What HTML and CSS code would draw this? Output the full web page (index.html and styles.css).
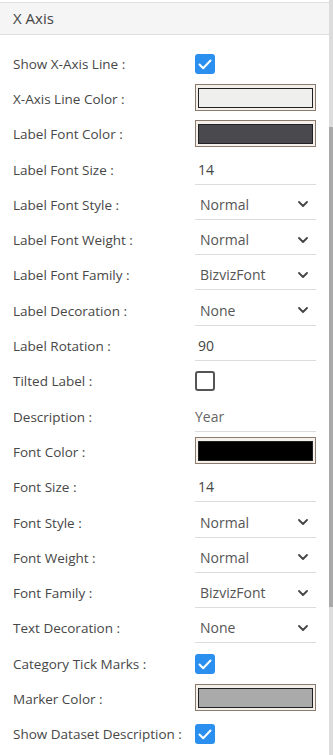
FILE: index.html
```html
<!DOCTYPE html>
<html lang="en">
<head>
<meta charset="utf-8">
<title>X Axis</title>
<link rel="stylesheet" href="styles.css">
</head>
<body>
<div class="frame">
  <div class="panel">
    <div class="header">X Axis</div>
    <div class="form">
      <div class="row"><span class="label">Show X-Axis Line :</span><span class="check on"><svg viewBox="0 0 20 20"><path d="M4.5 10.5l3.7 3.7 7.3-7.7"/></svg></span></div>
      <div class="row"><span class="label">X-Axis Line Color :</span><span class="color"><span class="swatch" style="background:#efefee"></span></span></div>
      <div class="row"><span class="label">Label Font Color :</span><span class="color"><span class="swatch" style="background:#4a4a4e"></span></span></div>
      <div class="row"><span class="label">Label Font Size :</span><span class="input">14</span></div>
      <div class="row"><span class="label">Label Font Style :</span><span class="select">Normal<svg class="chev" viewBox="0 0 10 6"><path d="M1 1l4 4 4-4"/></svg></span></div>
      <div class="row"><span class="label">Label Font Weight :</span><span class="select">Normal<svg class="chev" viewBox="0 0 10 6"><path d="M1 1l4 4 4-4"/></svg></span></div>
      <div class="row"><span class="label">Label Font Family :</span><span class="select">BizvizFont<svg class="chev" viewBox="0 0 10 6"><path d="M1 1l4 4 4-4"/></svg></span></div>
      <div class="row"><span class="label">Label Decoration :</span><span class="select">None<svg class="chev" viewBox="0 0 10 6"><path d="M1 1l4 4 4-4"/></svg></span></div>
      <div class="row"><span class="label">Label Rotation :</span><span class="input">90</span></div>
      <div class="row"><span class="label">Tilted Label :</span><span class="check"></span></div>
      <div class="row"><span class="label">Description :</span><span class="input desc">Year</span></div>
      <div class="row"><span class="label">Font Color :</span><span class="color"><span class="swatch" style="background:#000000"></span></span></div>
      <div class="row"><span class="label">Font Size :</span><span class="input">14</span></div>
      <div class="row"><span class="label">Font Style :</span><span class="select">Normal<svg class="chev" viewBox="0 0 10 6"><path d="M1 1l4 4 4-4"/></svg></span></div>
      <div class="row"><span class="label">Font Weight :</span><span class="select">Normal<svg class="chev" viewBox="0 0 10 6"><path d="M1 1l4 4 4-4"/></svg></span></div>
      <div class="row"><span class="label">Font Family :</span><span class="select">BizvizFont<svg class="chev" viewBox="0 0 10 6"><path d="M1 1l4 4 4-4"/></svg></span></div>
      <div class="row"><span class="label">Text Decoration :</span><span class="select">None<svg class="chev" viewBox="0 0 10 6"><path d="M1 1l4 4 4-4"/></svg></span></div>
      <div class="row"><span class="label">Category Tick Marks :</span><span class="check on"><svg viewBox="0 0 20 20"><path d="M4.5 10.5l3.7 3.7 7.3-7.7"/></svg></span></div>
      <div class="row"><span class="label">Marker Color :</span><span class="color"><span class="swatch" style="background:#aaaaaa"></span></span></div>
      <div class="row"><span class="label">Show Dataset Description :</span><span class="check on"><svg viewBox="0 0 20 20"><path d="M4.5 10.5l3.7 3.7 7.3-7.7"/></svg></span></div>
    </div>
  </div>
  <div class="scrollbar"><div class="thumb"></div></div>
</div>
</body>
</html>
```
FILE: styles.css
```css
html, body {
  margin: 0;
  padding: 0;
  background: #ffffff;
}
body {
  font-family: "Open Sans", "Noto Sans", sans-serif;
  color: #444444;
  overflow: hidden;
}
.frame {
  display: flex;
  width: 333px;
  height: 755px;
}
.panel {
  flex: 1;
  min-width: 0;
  padding-top: 2px;
}
.header {
  height: 31px;
  line-height: 31px;
  background: #f5f5f5;
  border-top: 1px solid #dedede;
  border-bottom: 1px solid #dedede;
  padding-left: 13px;
  font-size: 15px;
  color: #444;
}
.form {
  padding-top: 11px;
  display: flex;
  flex-direction: column;
}
.row {
  height: 35.3px;
  display: grid;
  grid-template-columns: 182px 121px;
  align-items: center;
  padding-left: 13px;
}
.label {
  font-size: 13.5px;
  color: #474747;
  white-space: nowrap;
}
.check {
  width: 20px;
  height: 20px;
  box-sizing: border-box;
  border: 2px solid #555;
  border-radius: 3px;
  background: #fff;
}
.check.on {
  border: none;
  background: #2b8ff0;
}
.check svg {
  width: 20px;
  height: 20px;
  display: block;
}
.check svg path {
  fill: none;
  stroke: #fff;
  stroke-width: 2;
  stroke-linecap: round;
  stroke-linejoin: round;
}
.color {
  display: block;
  height: 27px;
  box-sizing: border-box;
  border: 1px solid #8c7b6c;
  background: #f4f1ed;
  padding: 3px 2px 2px;
  margin-top: -2px;
}
.swatch {
  display: block;
  height: 100%;
  box-sizing: border-box;
  border: 1px solid #222;
}
.input, .select {
  display: flex;
  align-items: center;
  height: 28px;
  box-sizing: border-box;
  border-bottom: 1px solid #dcdcdc;
  font-size: 14px;
  color: #444;
  margin-top: 2px;
  padding-bottom: 2px;
}
.input {
  padding-left: 3px;
}
.input.desc {
  padding-left: 0;
  color: #666;
}
.select {
  padding-left: 5px;
  justify-content: space-between;
  padding-right: 8px;
  color: #555;
}
.chev {
  width: 10px;
  height: 6px;
}
.chev path {
  fill: none;
  stroke: #444;
  stroke-width: 1.8;
  stroke-linecap: round;
  stroke-linejoin: round;
}
.scrollbar {
  width: 4px;
  background: #dcdcdc;
  padding-top: 127px;
  box-sizing: border-box;
}
.thumb {
  height: 480px;
  background: #a9a9a9;
}
```
